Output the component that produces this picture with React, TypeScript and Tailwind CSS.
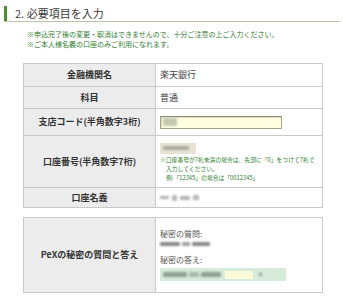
import React from "react";

const font = { fontFamily: '"Noto Sans CJK JP", "Noto Sans", sans-serif' };

function Blur({ w, h = 5, color = "#9a9a9a", className = "" }: { w: number; h?: number; color?: string; className?: string }) {
  return <div className={`rounded-[1px] blur-[1px] ${className}`} style={{ width: w, height: h, backgroundColor: color }} />;
}

export default function App() {
  const labelCls = "border border-[#c9c9c9] bg-[#ececec] text-center text-[9px] font-bold text-[#333] align-middle p-0";
  const valueCls = "border border-[#c9c9c9] bg-white text-left text-[9px] text-[#444] align-middle pl-[4px] pr-0 py-0";
  return (
    <div className="w-[343px] h-[297px] bg-white overflow-hidden relative" style={font}>
      {/* heading */}
      <div className="ml-[4px] mr-[3px] mt-[6px] flex items-center border-b border-[#b7c8a8] h-[16px]">
        <div className="w-[3px] h-[15px] bg-[#4f8f33]" />
        <div className="ml-[8px] text-[11px] leading-none text-[#3a3a3a]">2. 必要項目を入力</div>
      </div>

      {/* notes */}
      <div className="ml-[27px] mt-[7px] text-[7px] leading-[10px] text-[#2f7d2f]">
        <div>※申込完了後の変更・取消はできませんので、十分ご注意の上ご入力ください。</div>
        <div>※ご本人様名義の口座のみご利用になれます。</div>
      </div>

      {/* table 1 */}
      <table className="ml-[23px] mt-[14px] border-collapse w-[300px] table-fixed">
        <colgroup>
          <col className="w-[132px]" />
          <col />
        </colgroup>
        <tbody>
          <tr className="h-[23px]">
            <td className={labelCls}>金融機関名</td>
            <td className={valueCls}>楽天銀行</td>
          </tr>
          <tr className="h-[22px]">
            <td className={labelCls}>科目</td>
            <td className={valueCls}>普通</td>
          </tr>
          <tr className="h-[27px]">
            <td className={labelCls}>支店コード(半角数字3桁)</td>
            <td className={valueCls}>
              <div className="w-[122px] h-[13px] border border-[#a7a48c] border-t-[#8c8a78] bg-[#fffee0] flex items-center pl-[2px] shadow-[inset_1px_1px_1px_rgba(0,0,0,0.15)]">
                <Blur w={14} h={8} color="#c4c7b0" />
              </div>
            </td>
          </tr>
          <tr className="h-[52px]">
            <td className={labelCls}>口座番号(半角数字7桁)</td>
            <td className={valueCls}>
              <div className="flex flex-col pt-[1px]">
                <div className="w-[36px] h-[11px] bg-[#e6e3d2] flex items-center pl-[3px] blur-[0.6px]">
                  <Blur w={26} h={4} color="#a8a8a0" />
                </div>
                <div className="mt-[1px] text-[5.8px] leading-[9px] text-[#2f7d2f] whitespace-nowrap">
                  <div>※口座番号が7桁未満の場合は、先頭に「0」をつけて7桁で</div>
                  <div className="pl-[6px]">入力してください。</div>
                  <div className="pl-[6px]">例:「12345」の場合は「0012345」</div>
                </div>
              </div>
            </td>
          </tr>
          <tr className="h-[20px]">
            <td className={labelCls}>口座名義</td>
            <td className={valueCls}>
              <div className="flex items-center gap-[3px]">
                <Blur w={9} h={3} color="#b0b0b0" />
                <Blur w={5} h={6} color="#b8b8b8" />
                <Blur w={10} h={4} color="#b0b0b0" />
                <Blur w={6} h={5} color="#b8b8b8" />
              </div>
            </td>
          </tr>
        </tbody>
      </table>

      {/* table 2 */}
      <table className="ml-[23px] mt-[9px] border-collapse w-[300px] table-fixed">
        <colgroup>
          <col className="w-[132px]" />
          <col />
        </colgroup>
        <tbody>
          <tr className="h-[75px]">
            <td className={labelCls}>PeXの秘密の質問と答え</td>
            <td className={valueCls}>
              <div className="flex flex-col text-[8px] leading-[10px] text-[#555]">
                <div>秘密の質問:</div>
                <div className="mt-[3px] flex items-center gap-[2px]">
                  <Blur w={20} h={4} color="#8a8a8a" />
                  <Blur w={8} h={4} color="#a0a0a0" />
                  <Blur w={18} h={4} color="#8a8a8a" />
                </div>
                <div className="mt-[9px]">秘密の答え:</div>
                <div className="mt-[3px] w-[126px] h-[13px] bg-[#d6ebd9] flex items-center pl-[3px] gap-[2px]">
                  <Blur w={24} h={5} color="#8fa092" />
                  <Blur w={10} h={5} color="#a9b8ab" />
                  <Blur w={20} h={5} color="#8fa092" />
                  <div className="ml-[2px] w-[28px] h-[8px] bg-[#fbfbd9]" />
                  <Blur w={3} h={3} color="#8a8a8a" className="ml-[4px]" />
                </div>
              </div>
            </td>
          </tr>
        </tbody>
      </table>
    </div>
  );
}
